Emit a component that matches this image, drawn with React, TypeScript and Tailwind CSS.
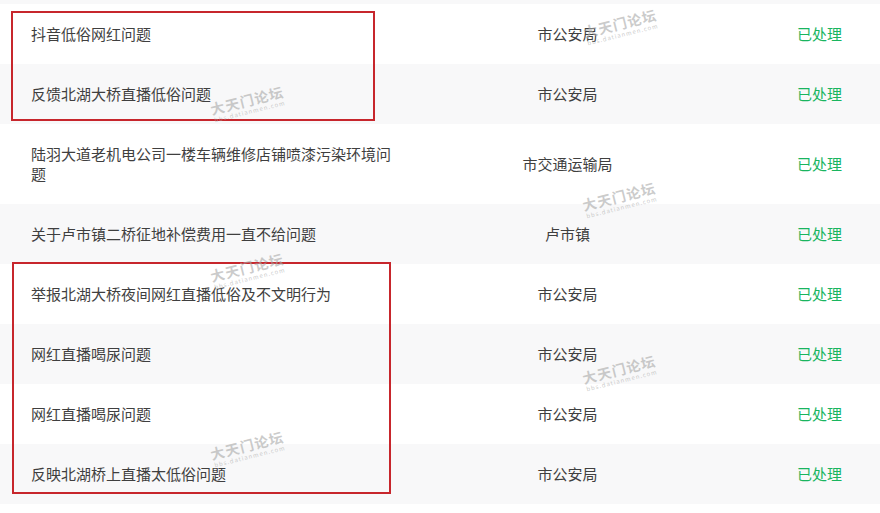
const rows = [
  { title: "抖音低俗网红问题", dept: "市公安局" },
  { title: "反馈北湖大桥直播低俗问题", dept: "市公安局" },
  { title: "陆羽大道老机电公司一楼车辆维修店铺喷漆污染环境问题", dept: "市交通运输局" },
  { title: "关于卢市镇二桥征地补偿费用一直不给问题", dept: "卢市镇" },
  { title: "举报北湖大桥夜间网红直播低俗及不文明行为", dept: "市公安局" },
  { title: "网红直播喝尿问题", dept: "市公安局" },
  { title: "网红直播喝尿问题", dept: "市公安局" },
  { title: "反映北湖桥上直播太低俗问题", dept: "市公安局" },
];

// 水印中心点
const marks = [
  { left: 248, top: 104 },
  { left: 621, top: 27 },
  { left: 620, top: 200 },
  { left: 248, top: 271 },
  { left: 620, top: 373 },
  { left: 248, top: 449 },
];

const Watermark = ({ left, top }: { left: number; top: number }) => (
  <div
    className="absolute pointer-events-none -translate-x-1/2 -translate-y-1/2 -rotate-[14deg] flex flex-col items-center text-[#a8a8a8]/60 leading-none"
    style={{ left, top }}
  >
    <span className="text-[14px] font-bold tracking-[1px]">大天门论坛</span>
    <span className="text-[6px] tracking-[1px] mt-[2px]">bbs.datianmen.com</span>
  </div>
);

export default function App() {
  return (
    <div className="relative w-[880px] h-[513px] overflow-hidden bg-white font-['Noto_Sans_CJK_SC','Noto_Sans',sans-serif] text-[15px] text-[#3f3f3f]">
      <div className="h-[4px] bg-[#f8f8f9]" />
      {rows.map((r, i) => (
        <div
          key={i}
          className={`flex items-center ${i === 2 ? "h-[80px]" : "h-[60px]"} ${i % 2 === 1 ? "bg-[#f8f8f9]" : "bg-white"}`}
        >
          <div className="w-[400px] shrink-0 pl-[31px] pr-[4px] leading-[20px]">{r.title}</div>
          <div className="w-[335px] shrink-0 text-center leading-[20px]">{r.dept}</div>
          <div className="flex-1 pl-[62px] text-[#19b55f] leading-[20px]">已处理</div>
        </div>
      ))}

      {/* 红框 */}
      <div className="absolute left-[11px] top-[11px] w-[364px] h-[110px] border-2 border-[#c7262c]" />
      <div className="absolute left-[12px] top-[262px] w-[379px] h-[232px] border-2 border-[#c7262c]" />

      {marks.map((m, i) => (
        <Watermark key={i} {...m} />
      ))}
    </div>
  );
}
